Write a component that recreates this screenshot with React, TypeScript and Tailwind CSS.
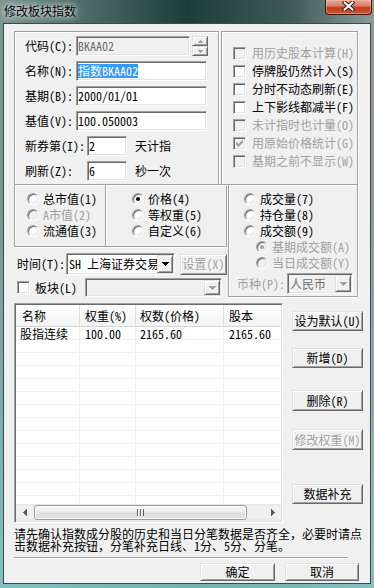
import React from "react";

const SUNKEN =
  "border border-t-[#a0a0a0] border-l-[#a0a0a0] border-b-white border-r-white shadow-[inset_1px_1px_0_#696969,inset_-1px_-1px_0_#e3e3e3]";
const RAISED =
  "border border-t-[#e3e3e3] border-l-[#e3e3e3] border-b-[#696969] border-r-[#696969] shadow-[inset_1px_1px_0_#ffffff,inset_-1px_-1px_0_#a0a0a0]";
const ETCHED = "border border-[#a0a0a0] shadow-[inset_1px_1px_0_#ffffff,1px_1px_0_#ffffff]";
const DIS = "text-[#a0a0a0]";

function Radio({ checked = false, disabled = false }: { checked?: boolean; disabled?: boolean }) {
  return (
    <span
      className={`flex items-center justify-center w-[12px] h-[12px] shrink-0 rounded-full border border-t-[#a0a0a0] border-l-[#a0a0a0] border-b-white border-r-white shadow-[inset_1px_1px_0_#696969,inset_-1px_-1px_0_#e3e3e3] ${
        disabled ? "bg-[#f0f0f0]" : "bg-white"
      }`}
    >
      {checked && (
        <span className={`w-[4px] h-[4px] rounded-full ${disabled ? "bg-[#a0a0a0]" : "bg-black"}`} />
      )}
    </span>
  );
}

function Check({ checked = false, disabled = false }: { checked?: boolean; disabled?: boolean }) {
  return (
    <span
      className={`flex items-center justify-center w-[13px] h-[13px] shrink-0 ${SUNKEN} ${
        disabled ? "bg-[#f0f0f0]" : "bg-white"
      }`}
    >
      {checked && (
        <svg width="7" height="7" viewBox="0 0 7 7" shapeRendering="crispEdges">
          <path
            d="M0 2h1v3h-1z M1 3h1v3h-1z M2 4h1v3h-1z M3 3h1v3h-1z M4 2h1v3h-1z M5 1h1v3h-1z M6 0h1v3h-1z"
            fill={disabled ? "#a0a0a0" : "#000000"}
          />
        </svg>
      )}
    </span>
  );
}

function DownArrow({ color = "#000000" }: { color?: string }) {
  return (
    <svg width="7" height="4" viewBox="0 0 7 4" shapeRendering="crispEdges">
      <path d="M0 0h7v1h-7z M1 1h5v1h-5z M2 2h3v1h-3z M3 3h1v1h-1z" fill={color} />
    </svg>
  );
}

function UpArrow({ color = "#000000" }: { color?: string }) {
  return (
    <svg width="5" height="3" viewBox="0 0 5 3" shapeRendering="crispEdges">
      <path d="M2 0h1v1h-1z M1 1h3v1h-3z M0 2h5v1h-5z" fill={color} />
    </svg>
  );
}

function SmallDown({ color = "#000000" }: { color?: string }) {
  return (
    <svg width="5" height="3" viewBox="0 0 5 3" shapeRendering="crispEdges">
      <path d="M0 0h5v1h-5z M1 1h3v1h-3z M2 2h1v1h-1z" fill={color} />
    </svg>
  );
}

function Combo({ cls, text = "", disabled = false }: { cls: string; text?: string; disabled?: boolean }) {
  return (
    <div className={`flex items-stretch p-[1px] ${cls} ${SUNKEN} ${disabled ? "bg-[#f0f0f0]" : "bg-white"}`}>
      <div
        className={`flex-1 min-w-0 flex items-center pl-[1px] whitespace-nowrap ${
          disabled ? "text-[#6d6d6d]" : "text-black"
        }`}
      >
        {text}
      </div>
      <div className={`relative w-[16px] shrink-0 flex items-center justify-center bg-[#f0f0f0] ${RAISED}`}>
        <DownArrow color={disabled ? "#a0a0a0" : "#000000"} />
      </div>
    </div>
  );
}

function Btn({ cls, children, disabled = false }: { cls: string; children: React.ReactNode; disabled?: boolean }) {
  return (
    <div
      className={`flex items-center justify-center whitespace-nowrap bg-[#f0f0f0] ${RAISED} ${cls} ${
        disabled ? "text-[#a0a0a0] [text-shadow:1px_1px_0_#ffffff]" : "text-black"
      }`}
    >
      {children}
    </div>
  );
}

function RadioItem({ label, checked = false, disabled = false }: { label: string; checked?: boolean; disabled?: boolean }) {
  return (
    <div className="flex items-center h-[16px] gap-[4px]">
      <Radio checked={checked} disabled={disabled} />
      <span className={`whitespace-nowrap ${disabled ? DIS : ""}`}>{label}</span>
    </div>
  );
}

function Field({ cls, children, disabled = false }: { cls: string; children?: React.ReactNode; disabled?: boolean }) {
  return (
    <div
      className={`flex items-center pl-[1px] whitespace-nowrap overflow-hidden ${SUNKEN} ${cls} ${
        disabled ? "bg-[#f0f0f0] text-[#6d6d6d]" : "bg-white text-black"
      }`}
    >
      {children}
    </div>
  );
}

const checks: { label: string; checked?: boolean; disabled?: boolean }[] = [
  { label: "用历史股本计算(H)", disabled: true },
  { label: "停牌股仍然计入(S)" },
  { label: "分时不动态刷新(E)" },
  { label: "上下影线都减半(F)" },
  { label: "未计指时也计量(O)", disabled: true },
  { label: "用原始价格统计(G)", checked: true, disabled: true },
  { label: "基期之前不显示(W)", disabled: true },
];

const rows = [
  ["股指连续", "100.00", "2165.60", "2165.60"],
  ...Array.from({ length: 13 }, () => ["", "", "", ""]),
];

const ROWBG = "bg-[linear-gradient(0deg,#f0f0f0_1px,transparent_1px)]";
const CELLBG = "bg-[linear-gradient(270deg,#f0f0f0_1px,transparent_1px)]";

function Table() {
  return (
    <div className={`w-[269px] h-[220px] shrink-0 flex flex-col p-[1px] overflow-hidden bg-white ${SUNKEN}`}>
      <div className="flex h-[22px] shrink-0 bg-[linear-gradient(180deg,#ffffff,#f2f3f3)] border-b border-[#d5d5d5]">
        <div className="w-[64px] shrink-0 pl-[6px] flex items-center border-r border-[#dcdcdc]">名称</div>
        <div className="w-[56px] shrink-0 pl-[5px] flex items-center border-r border-[#dcdcdc] whitespace-nowrap">权重(%)</div>
        <div className="w-[88px] shrink-0 pl-[4px] flex items-center border-r border-[#dcdcdc] whitespace-nowrap">权数(价格)</div>
        <div className="flex-1 pl-[5px] flex items-center">股本</div>
      </div>
      <div className="flex-1 overflow-hidden flex flex-col">
        {rows.map((r, i) => (
          <div key={i} className={`flex h-[13px] shrink-0 leading-[13px] ${ROWBG}`}>
            <div className={`w-[64px] shrink-0 pl-[4px] whitespace-nowrap ${CELLBG}`}>{r[0]}</div>
            <div className={`w-[56px] shrink-0 pl-[5px] whitespace-nowrap ${CELLBG}`}>{r[1]}</div>
            <div className={`w-[88px] shrink-0 pl-[4px] whitespace-nowrap ${CELLBG}`}>{r[2]}</div>
            <div className="flex-1 pl-[5px] whitespace-nowrap">{r[3]}</div>
          </div>
        ))}
      </div>
      <div className="flex h-[17px] shrink-0 items-center bg-[linear-gradient(180deg,#e4e4e4_0%,#f0f0f0_18%,#f0f0f0_82%,#e4e4e4_100%)]">
        <div className="w-[18px] h-full flex items-center justify-center">
          <svg width="4" height="7" viewBox="0 0 4 7" shapeRendering="crispEdges">
            <path d="M3 0h1v7h-1z M2 1h1v5h-1z M1 2h1v3h-1z M0 3h1v1h-1z" fill="#5a5a5a" />
          </svg>
        </div>
        <div className="w-[213px] h-[15px] rounded-[3px] border border-[#9a9a9a] bg-[linear-gradient(180deg,#f7f7f7_0%,#ececec_48%,#dedede_52%,#e2e2e2_100%)] shadow-[inset_0_0_0_1px_#ffffff] flex items-center justify-center">
          <svg width="7" height="7" viewBox="0 0 7 7" shapeRendering="crispEdges">
            <path d="M0 0h1v7h-1z M3 0h1v7h-1z M6 0h1v7h-1z" fill="#5c5c5c" />
            <path d="M1 0h1v7h-1z M4 0h1v7h-1z" fill="#ffffff" />
          </svg>
        </div>
        <div className="flex-1" />
        <div className="w-[17px] h-full flex items-center justify-center">
          <svg width="4" height="7" viewBox="0 0 4 7" shapeRendering="crispEdges">
            <path d="M0 0h1v7h-1z M1 1h1v5h-1z M2 2h1v3h-1z M3 3h1v1h-1z" fill="#5a5a5a" />
          </svg>
        </div>
      </div>
    </div>
  );
}

export default function App() {
  return (
    <div className="w-[374px] h-[588px] overflow-hidden flex flex-col text-[12px] leading-[14px] text-black [font-family:'Noto_Sans_Mono_CJK_SC','Noto_Sans_CJK_SC',sans-serif] bg-[linear-gradient(180deg,rgba(0,0,0,0)_0%,rgba(0,0,0,0)_35%,rgba(130,200,200,0.85)_100%),linear-gradient(90deg,#7e9692_0%,#52706c_20%,#1d3d3a_50%,#3e5b58_78%,#8a9d9a_100%)]">
      {/* Title bar */}
      <div className="flex h-[23px] shrink-0">
        <div className="pl-[4px] pt-[4px] text-[12px] leading-[13px] text-[#050505] [text-shadow:0_0_5px_#ffffff,0_0_9px_rgba(255,255,255,0.7)]">
          修改板块指数
        </div>
        <div className="ml-auto mr-[2px] w-[47px] h-[15px] rounded-b-[4px] border border-t-0 border-[#3e130b] bg-[linear-gradient(180deg,#e7a796_0%,#d8806a_42%,#c13a1e_55%,#cc5634_100%)] shadow-[inset_0_0_0_1px_rgba(255,205,190,0.45)] flex items-start justify-center pt-[1px]">
          <svg width="13" height="10" viewBox="0 0 13 10">
            <path d="M2.5 1.5 L10.5 8.5 M10.5 1.5 L2.5 8.5" stroke="#3a1a14" strokeWidth="4" strokeLinecap="square" />
            <path d="M2.5 1.5 L10.5 8.5 M10.5 1.5 L2.5 8.5" stroke="#ffffff" strokeWidth="2" strokeLinecap="square" />
          </svg>
        </div>
      </div>

      {/* Client area */}
      <div className="ml-[3px] w-[368px] h-[561px] shrink-0 border border-[#3a4a4a] bg-[#f0f0f0] flex flex-col pl-[10px] pt-[7px]">
        {/* Top section */}
        <div className="flex">
          {/* Left column */}
          <div className="flex flex-col w-[214px] shrink-0">
            <div className={`w-[205px] h-[154px] ${ETCHED} flex flex-col gap-[5px] pl-[10px] pt-[4px]`}>
              <div className="flex items-center h-[20px]">
                <span className="w-[51px] whitespace-nowrap">代码(C):</span>
                <Field cls="w-[114px] h-[20px]" disabled>
                  BKAA02
                </Field>
                <div className="flex flex-col ml-[2px] w-[16px] h-[20px]">
                  <div className={`h-[10px] flex items-center justify-center bg-[#f0f0f0] ${RAISED}`}>
                    <UpArrow color="#a0a0a0" />
                  </div>
                  <div className={`h-[10px] flex items-center justify-center bg-[#f0f0f0] ${RAISED}`}>
                    <SmallDown color="#a0a0a0" />
                  </div>
                </div>
              </div>
              <div className="flex items-center h-[20px]">
                <span className="w-[51px] whitespace-nowrap">名称(N):</span>
                <Field cls="w-[131px] h-[20px]">
                  <span className="bg-[#3399ff] text-white">指数BKAA02</span>
                </Field>
              </div>
              <div className="flex items-center h-[20px]">
                <span className="w-[51px] whitespace-nowrap">基期(B):</span>
                <Field cls="w-[131px] h-[20px]">2000/01/01</Field>
              </div>
              <div className="flex items-center h-[20px]">
                <span className="w-[51px] whitespace-nowrap">基值(V):</span>
                <Field cls="w-[131px] h-[20px]">100.050003</Field>
              </div>
              <div className="flex items-center h-[20px]">
                <span className="w-[62px] whitespace-nowrap">新券第(I):</span>
                <Field cls="w-[40px] h-[20px]">2</Field>
                <span className="ml-[8px]">天计指</span>
              </div>
              <div className="flex items-center h-[20px]">
                <span className="w-[62px] whitespace-nowrap">刷新(Z):</span>
                <Field cls="w-[40px] h-[20px]">6</Field>
                <span className="ml-[8px]">秒一次</span>
              </div>
            </div>

            <div className="flex -mt-px">
              <div className={`w-[92px] h-[63px] ${ETCHED} flex flex-col pt-[6px] pl-[12px]`}>
                <RadioItem label="总市值(1)" />
                <RadioItem label="A市值(2)" disabled />
                <RadioItem label="流通值(3)" />
              </div>
              <div className={`-ml-px w-[122px] h-[63px] ${ETCHED} flex flex-col pt-[6px] pl-[26px]`}>
                <RadioItem label="价格(4)" checked />
                <RadioItem label="等权重(5)" />
                <RadioItem label="自定义(6)" />
              </div>
            </div>

            <div className="flex items-center h-[22px] mt-[6px] pl-[3px]">
              <span className="w-[49px] whitespace-nowrap">时间(T):</span>
              <Combo cls="w-[109px] h-[22px]" text="SH 上海证券交易" />
              <Btn cls="ml-[5px] w-[47px] h-[21px]" disabled>
                设置(X)
              </Btn>
            </div>

            <div className="flex items-center h-[19px] mt-[3px] pl-[3px]">
              <div className="w-[68px] flex items-center">
                <Check />
                <span className="ml-[5px] whitespace-nowrap">板块(L)</span>
              </div>
              <Combo cls="w-[137px] h-[19px]" disabled />
            </div>
          </div>

          {/* Right column */}
          <div className="flex flex-col -ml-[7px]">
            <div className={`w-[137px] h-[154px] ${ETCHED} flex flex-col pt-[12px] pl-[11px]`}>
              {checks.map((c) => (
                <div key={c.label} className="flex items-center h-[18px]">
                  <Check checked={c.checked} disabled={c.disabled} />
                  <span className={`ml-[6px] whitespace-nowrap ${c.disabled ? DIS : ""}`}>{c.label}</span>
                </div>
              ))}
            </div>
            <div className={`ml-[7px] -mt-px w-[130px] h-[113px] ${ETCHED} flex flex-col pt-[6px] pl-[15px]`}>
              <div className="flex flex-col gap-0">
                <RadioItem label="成交量(7)" />
                <RadioItem label="持仓量(8)" />
                <RadioItem label="成交额(9)" />
              </div>
              <div className="flex flex-col pl-[12px]">
                <RadioItem label="基期成交额(A)" checked disabled />
                <RadioItem label="当日成交额(Y)" disabled />
              </div>
              <div className="flex items-center h-[21px] mt-[2px] -ml-[7px]">
                <span className={`w-[50px] whitespace-nowrap ${DIS}`}>币种(P):</span>
                <Combo cls="w-[66px] h-[21px]" text="人民币" disabled />
              </div>
            </div>
          </div>
        </div>

        {/* Table row */}
        <div className="flex mt-[6px]">
          <Table />
          <div className="ml-[9px] w-[71px] flex flex-col">
            <Btn cls="mt-[8px] h-[20px]">设为默认(U)</Btn>
            <Btn cls="mt-[17px] h-[20px]">新增(D)</Btn>
            <Btn cls="mt-[22px] h-[21px]">删除(R)</Btn>
            <Btn cls="mt-[18px] h-[21px]" disabled>
              修改权重(M)
            </Btn>
            <Btn cls="mt-[34px] h-[20px]">数据补充</Btn>
          </div>
        </div>

        <div className="mt-[5px] leading-[12px] whitespace-nowrap">
          请先确认指数成分股的历史和当日分笔数据是否齐全，必要时请点
          <br />
          击数据补充按钮，分笔补充日线、1分、5分、分笔。
        </div>

        <div className="mt-[5px] w-[334px] h-[2px] border-t border-t-[#a0a0a0] border-b border-b-white" />

        <div className="flex mt-[4px]">
          <Btn cls="ml-[186px] w-[75px] h-[18px]">确定</Btn>
          <Btn cls="ml-[10px] w-[74px] h-[18px]">取消</Btn>
        </div>
      </div>
    </div>
  );
}
